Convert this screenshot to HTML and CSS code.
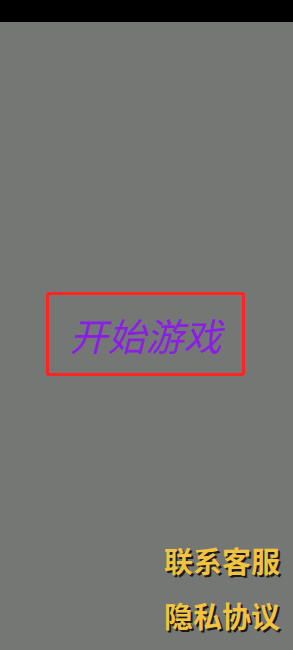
FILE: index.html
```html
<!DOCTYPE html>
<html lang="zh">
<head>
    <meta charset="UTF-8">
    <meta name="viewport" content="width=device-width, initial-scale=1.0">
    <title>开始游戏</title>
    <link rel="stylesheet" href="styles.css">
</head>
<body>
    <div class="status_bar"></div>
    <div class="stage">
        <!-- 开始按钮 -->
        <div class="start_btn">开始游戏</div>

        <!-- 底部链接 -->
        <div class="links">
            <a href="#">联系客服</a>
            <a href="#">隐私协议</a>
        </div>
    </div>
</body>
</html>
```

FILE: styles.css
```css
*{
    margin: 0;
    padding: 0;
}
html,body{
    height: 100%;
}
body{
    display: flex;
    flex-direction: column;
    background: #757775;
    font-family: "Noto Sans CJK SC", sans-serif;
}
.status_bar{
    height: 22px;
    background: #000;
}
.stage{
    flex: 1;
    position: relative;
    display: flex;
    justify-content: center;
    align-items: center;
}
.start_btn{
    width: 193px;
    height: 78px;
    border: 3px solid #ff2424;
    border-radius: 3px;
    margin-top: -4px;
    margin-left: -2px;
    display: flex;
    align-items: center;
    justify-content: center;
    color: #8a1fe2;
    font-size: 38px;
    font-style: italic;
    cursor: pointer;
}
.links{
    position: absolute;
    right: 13px;
    bottom: 17px;
    display: flex;
    flex-direction: column;
    gap: 19px;
}
.links a{
    color: #f2c33f;
    text-decoration: none;
    font-size: 29px;
    font-weight: bold;
    line-height: 36px;
    text-shadow: 2px 2px 0 #1a1a1a;
}
```
